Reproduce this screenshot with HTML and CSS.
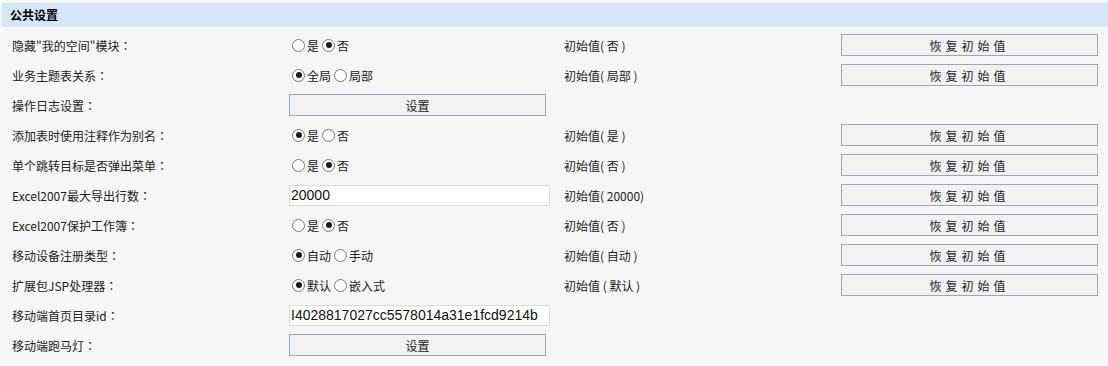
FILE: index.html
```html
<!DOCTYPE html>
<html lang="zh-CN">
<head>
    <meta charset="UTF-8">
    <title>公共设置</title>
    <link rel="stylesheet" href="styles.css">
</head>
<body>

    <div class="panel">
        <div class="panel-title">公共设置</div>

        <div class="settings">
            <div class="label">隐藏"我的空间"模块<span class="colon">：</span></div>
            <div class="ctrl">
                <label><input type="radio" name="myspace">是</label>
                <label><input type="radio" name="myspace" checked>否</label>
            </div>
            <div class="init">初始值( 否 )</div>
            <div class="act"><button class="btn">恢复初始值</button></div>

            <div class="label">业务主题表关系<span class="colon">：</span></div>
            <div class="ctrl">
                <label><input type="radio" name="relation" checked>全局</label>
                <label><input type="radio" name="relation">局部</label>
            </div>
            <div class="init">初始值( 局部 )</div>
            <div class="act"><button class="btn">恢复初始值</button></div>

            <div class="label">操作日志设置<span class="colon">：</span></div>
            <div class="ctrl"><button class="btn btn-set">设置</button></div>
            <div class="init"></div>
            <div class="act"></div>

            <div class="label">添加表时使用注释作为别名<span class="colon">：</span></div>
            <div class="ctrl">
                <label><input type="radio" name="alias" checked>是</label>
                <label><input type="radio" name="alias">否</label>
            </div>
            <div class="init">初始值( 是 )</div>
            <div class="act"><button class="btn">恢复初始值</button></div>

            <div class="label">单个跳转目标是否弹出菜单<span class="colon">：</span></div>
            <div class="ctrl">
                <label><input type="radio" name="popup">是</label>
                <label><input type="radio" name="popup" checked>否</label>
            </div>
            <div class="init">初始值( 否 )</div>
            <div class="act"><button class="btn">恢复初始值</button></div>

            <div class="label">Excel2007最大导出行数<span class="colon">：</span></div>
            <div class="ctrl"><input type="text" class="field" value="20000"></div>
            <div class="init">初始值( 20000)</div>
            <div class="act"><button class="btn">恢复初始值</button></div>

            <div class="label">Excel2007保护工作簿<span class="colon">：</span></div>
            <div class="ctrl">
                <label><input type="radio" name="protect">是</label>
                <label><input type="radio" name="protect" checked>否</label>
            </div>
            <div class="init">初始值( 否 )</div>
            <div class="act"><button class="btn">恢复初始值</button></div>

            <div class="label">移动设备注册类型<span class="colon">：</span></div>
            <div class="ctrl">
                <label><input type="radio" name="register" checked>自动</label>
                <label><input type="radio" name="register">手动</label>
            </div>
            <div class="init">初始值( 自动 )</div>
            <div class="act"><button class="btn">恢复初始值</button></div>

            <div class="label">扩展包JSP处理器<span class="colon">：</span></div>
            <div class="ctrl">
                <label><input type="radio" name="jsp" checked>默认</label>
                <label><input type="radio" name="jsp">嵌入式</label>
            </div>
            <div class="init">初始值 ( 默认 )</div>
            <div class="act"><button class="btn">恢复初始值</button></div>

            <div class="label">移动端首页目录id<span class="colon">：</span></div>
            <div class="ctrl"><input type="text" class="field" value="I4028817027cc5578014a31e1fcd9214b"></div>
            <div class="init"></div>
            <div class="act"></div>

            <div class="label">移动端跑马灯<span class="colon">：</span></div>
            <div class="ctrl"><button class="btn btn-set">设置</button></div>
            <div class="init"></div>
            <div class="act"></div>
        </div>
    </div>

</body>
</html>
```

FILE: styles.css
```css
body {
    margin: 0;
    background-color: #f6f6f6;
    color: #222;
    font-family: "Noto Sans CJK SC", sans-serif;
    font-size: 12px;
}

.panel {
    padding: 3px 0 0 2px;
}

.panel-title {
    height: 24px;
    line-height: 24px;
    padding-left: 8px;
    background-color: #d5e6f6;
    color: #000;
    font-weight: bold;
    font-size: 12px;
}

.settings {
    display: grid;
    grid-template-columns: 275px 276px 277px 1fr;
    grid-auto-rows: 30px;
    margin-top: 3px;
}

.settings > div {
    display: flex;
    align-items: center;
}

.label {
    padding-left: 10px;
}

/* centred full-width colon, as in YaHei */
.colon {
    font-family: "Noto Sans CJK TC", sans-serif;
}

.ctrl {
    padding-left: 12px;
}

.init {
    padding-left: 11px;
}

.act {
    padding-left: 11px;
}

.ctrl label {
    display: flex;
    align-items: center;
}

/* old-style grey radio with dark dot */
.ctrl input[type="radio"] {
    appearance: none;
    -webkit-appearance: none;
    box-sizing: border-box;
    width: 13px;
    height: 13px;
    margin: 0 2px 0 3px;
    border: 1px solid #7a7a7a;
    border-radius: 50%;
    background-color: #fff;
    position: relative;
}

.ctrl input[type="radio"]:checked::after {
    content: "";
    position: absolute;
    left: 2.5px;
    top: 2.5px;
    width: 6px;
    height: 6px;
    border-radius: 50%;
    background-color: #1a1a1a;
}

.btn {
    width: 257px;
    height: 22px;
    padding: 0;
    border: 1px solid #9ba7b5;
    background-color: #f2f2f2;
    color: #222;
    font-family: "Noto Sans CJK SC", sans-serif;
    font-size: 12px;
    letter-spacing: 4px;
    cursor: pointer;
}

.btn-set {
    letter-spacing: 0;
}

.field {
    width: 261px;
    height: 21px;
    box-sizing: border-box;
    padding: 0 1px;
    border: 1px solid #dcdcdc;
    background-color: #fff;
    color: #111;
    font-family: "Liberation Sans", Arial, sans-serif;
    font-size: 14px;
}
```
